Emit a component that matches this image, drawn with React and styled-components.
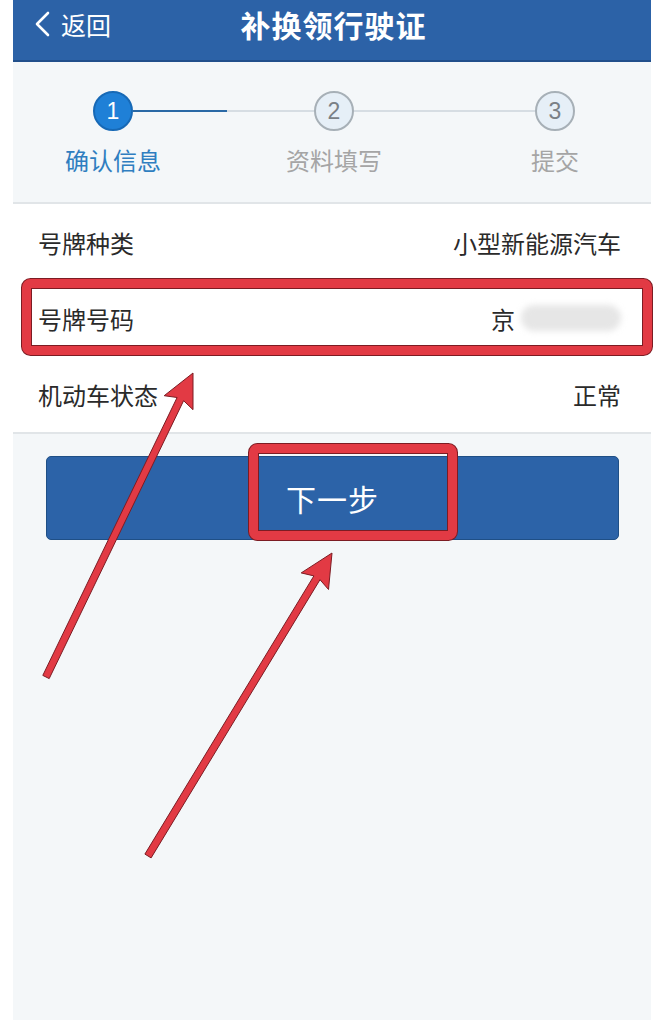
import React from 'react';
import styled, { createGlobalStyle } from 'styled-components';

const GlobalStyle = createGlobalStyle`
  html, body {
    margin: 0;
    padding: 0;
    background: #ffffff;
  }
  body {
    font-family: "Noto Sans CJK SC", "Noto Sans", "Liberation Sans", sans-serif;
  }
`;

const Page = styled.div`
  position: relative;
  width: 656px;
  height: 1020px;
  background: #ffffff;
  overflow: hidden;
`;

const Screen = styled.div`
  margin: 0 5px 0 13px;
  height: 1020px;
  background: #f4f7f9;
  display: flex;
  flex-direction: column;
`;

const Header = styled.div`
  height: 62px;
  box-sizing: border-box;
  padding: 0 0 12px 20px;
  background: #2c62a7;
  border-bottom: 2px solid #214f8b;
  display: flex;
  align-items: center;
  color: #ffffff;
`;

const Back = styled.div`
  display: flex;
  align-items: center;
  gap: 10px;
  font-size: 25px;
  line-height: 1;
  svg {
    display: block;
  }
`;

const Title = styled.div`
  flex: 1;
  text-align: center;
  margin-left: -115px;
  font-size: 30px;
  font-weight: 700;
  letter-spacing: 1px;
  padding-left: 20px;
`;

const Stepper = styled.div`
  padding: 29px 36px 0 40px;
  height: 142px;
  box-sizing: border-box;
  background: #f4f7f9;
  border-bottom: 2px solid #e1e5e8;
  display: flex;
  align-items: flex-start;
`;

const Step = styled.div`
  width: 120px;
  display: flex;
  flex-direction: column;
  align-items: center;
  position: relative;
  z-index: 1;
`;

const Circle = styled.div`
  width: 40px;
  height: 40px;
  box-sizing: border-box;
  border-radius: 50%;
  display: flex;
  align-items: center;
  justify-content: center;
  font-family: "Liberation Sans", Arial, sans-serif;
  font-size: 23px;
  background: ${p => (p.active ? '#1f80d7' : '#e6eff7')};
  border: 2px solid ${p => (p.active ? '#1769b6' : '#a7b0b7')};
  color: ${p => (p.active ? '#ffffff' : '#7a8086')};
`;

const StepLabel = styled.div`
  margin-top: 17px;
  font-size: 24px;
  line-height: 1;
  color: ${p => (p.active ? '#2f7ec0' : '#a5a5a5')};
`;

const Connector = styled.div`
  flex: 1;
  height: 2px;
  margin: 19px -40px 0;
  background: ${p =>
    p.progress
      ? 'linear-gradient(to right, #2a69a6 0 52%, #d6dde3 52% 100%)'
      : '#d6dde3'};
`;

const List = styled.div`
  background: #ffffff;
  border-bottom: 2px solid #e1e5e8;
`;

const Row = styled.div`
  height: 76px;
  padding: 0 30px 0 25px;
  display: flex;
  align-items: center;
  justify-content: space-between;
  font-size: 24px;
  color: #2a2a2a;
`;

const Value = styled.span`
  display: flex;
  align-items: center;
`;

const Blurred = styled.span`
  display: inline-block;
  width: 100px;
  height: 26px;
  margin-left: 6px;
  background: #e6e6e6;
  border-radius: 13px;
  filter: blur(3px);
`;

const Actions = styled.div`
  padding: 22px 32px 0 33px;
`;

const NextButton = styled.button`
  width: 100%;
  height: 84px;
  border: 1px solid #1f4f86;
  border-radius: 5px;
  background: #2c63a8;
  color: #ffffff;
  font-family: "Noto Sans CJK SC", sans-serif;
  font-size: 30px;
  letter-spacing: 1px;
  padding: 0;
  cursor: pointer;
`;

const Overlay = styled.svg`
  position: absolute;
  top: 0;
  left: 0;
  pointer-events: none;
`;

const RED = '#e23a44';
const DARK = '#7c1c23';

function arrowPoints(tail, tip, shaft = 3.6, headLen = 29, headHalf = 16) {
  const dx = tip[0] - tail[0];
  const dy = tip[1] - tail[1];
  const len = Math.hypot(dx, dy);
  const ux = dx / len;
  const uy = dy / len;
  const nx = -uy;
  const ny = ux;
  const bx = tip[0] - ux * headLen;
  const by = tip[1] - uy * headLen;
  const pts = [
    [tail[0] + nx * shaft, tail[1] + ny * shaft],
    [bx + nx * shaft, by + ny * shaft],
    [bx - ux * 4 + nx * headHalf, by - uy * 4 + ny * headHalf],
    tip,
    [bx - ux * 4 - nx * headHalf, by - uy * 4 - ny * headHalf],
    [bx - nx * shaft, by - ny * shaft],
    [tail[0] - nx * shaft, tail[1] - ny * shaft],
  ];
  return pts.map(p => p.map(v => v.toFixed(1)).join(',')).join(' ');
}

function Frame({ x, y, w, h }) {
  return (
    <g>
      <rect x={x} y={y} width={w} height={h} rx="4" fill="none" stroke={DARK} strokeWidth="11" />
      <rect x={x} y={y} width={w} height={h} rx="4" fill="none" stroke={RED} strokeWidth="9" />
    </g>
  );
}

function Annotations() {
  return (
    <Overlay width="656" height="1020" viewBox="0 0 656 1020">
      <Frame x={26.5} y={283.5} w={621} h={67} />
      <Frame x={253.5} y={448.5} w={199} h={87} />
      <polygon points={arrowPoints([46, 677], [193, 373])} fill={RED} stroke={DARK} strokeWidth="1" />
      <polygon points={arrowPoints([148, 856], [332, 553])} fill={RED} stroke={DARK} strokeWidth="1" />
    </Overlay>
  );
}

const steps = [
  { n: 1, label: '确认信息' },
  { n: 2, label: '资料填写' },
  { n: 3, label: '提交' },
];

export default function App() {
  return (
    <Page>
      <GlobalStyle />
      <Screen>
        <Header>
          <Back>
            <svg width="18" height="26" viewBox="0 0 18 26">
              <polyline points="15,2 4,13 15,24" fill="none" stroke="#ffffff" strokeWidth="2.6" strokeLinecap="round" strokeLinejoin="round" />
            </svg>
            返回
          </Back>
          <Title>补换领行驶证</Title>
        </Header>

        <Stepper>
          {steps.map((s, i) => (
            <React.Fragment key={s.n}>
              {i > 0 && <Connector progress={i === 1} />}
              <Step>
                <Circle active={i === 0}>{s.n}</Circle>
                <StepLabel active={i === 0}>{s.label}</StepLabel>
              </Step>
            </React.Fragment>
          ))}
        </Stepper>

        <List>
          <Row>
            <span>号牌种类</span>
            <Value>小型新能源汽车</Value>
          </Row>
          <Row>
            <span>号牌号码</span>
            <Value>
              京<Blurred />
            </Value>
          </Row>
          <Row>
            <span>机动车状态</span>
            <Value>正常</Value>
          </Row>
        </List>

        <Actions>
          <NextButton>下一步</NextButton>
        </Actions>
      </Screen>
      <Annotations />
    </Page>
  );
}
